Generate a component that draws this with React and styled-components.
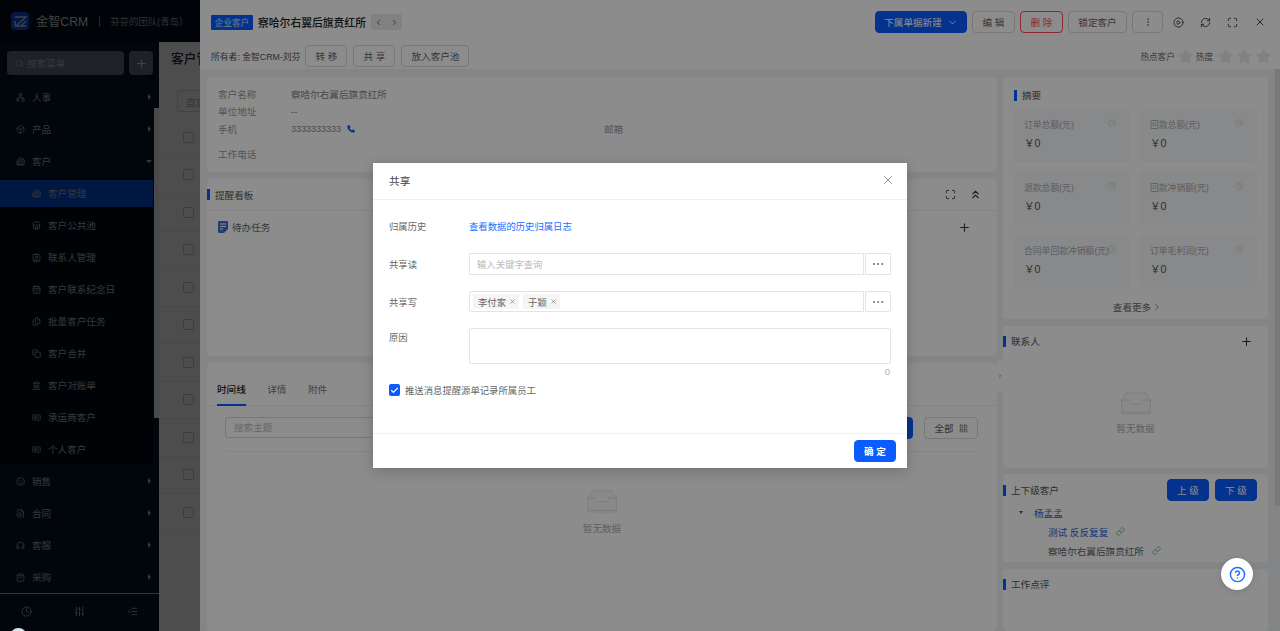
import React from "react";
import styled, { createGlobalStyle } from "styled-components";
import {
  Search, Plus, Network, Box, Building2, Store, Contact, CalendarDays, Copy, Files, Landmark,
  Clock, SlidersVertical, IndentDecrease, CirclePlay, RefreshCw, Maximize, X, ChevronLeft,
  ChevronRight, ChevronDown, ChevronsUp, EllipsisVertical, Ellipsis, Phone, Star, Link as ChainLink, Check, LayoutGrid,
  Smile, FileClock, Headphones, ShoppingBag, IdCard, CircleHelp,
} from "lucide-react";

const Global = createGlobalStyle`
  html, body { margin: 0; padding: 0; height: 631px; overflow: hidden; background: #fff; }
  * { box-sizing: border-box; }
  body { font-family: "Liberation Sans", "Noto Sans CJK SC", sans-serif; font-size: 9.6px; color: #555; }
`;

const Page = styled.div`
  position: relative;
  display: flex;
  width: 1280px;
  height: 631px;
  overflow: hidden;
  background: #fff;
`;
const Sidebar = styled.aside`
  position: relative;
  flex: 0 0 159px;
  width: 159px;
  min-width: 0;
  display: flex;
  flex-direction: column;
  background: #001529;
  color: #b4b8bc;
`;
const Brand = styled.div`
  display: flex;
  align-items: center;
  flex: 0 0 42px;
  padding-left: 11px;
  background: #00101f;
`;
const LogoMark = styled.span`
  display: flex;
  align-items: center;
  justify-content: center;
  flex: none;
  width: 18px;
  height: 18px;
  margin-right: 7px;
  border-radius: 4px;
  background: #0e4fe0;
`;
const BrandName = styled.span`
  font-size: 12.2px;
  color: #d8d8d8;
  white-space: nowrap;
`;
const BrandDivider = styled.span`
  flex: none;
  width: 1px;
  height: 11px;
  margin: 0 10px 0 11px;
  background: #888;
`;
const Team = styled.span`
  font-size: 9.4px;
  color: #9da3a8;
  white-space: nowrap;
`;
const SearchRow = styled.div`
  display: flex;
  gap: 5px;
  flex: 0 0 39px;
  padding: 9px 6px 6px 7px;
`;
const MenuSearch = styled.div`
  display: flex;
  align-items: center;
  gap: 3px;
  flex: 1;
  padding-left: 8px;
  border-radius: 4px;
  background: #687080;
  color: #b8bcc2;
`;
const AddBtn = styled.div`
  display: flex;
  align-items: center;
  justify-content: center;
  width: 24px;
  border-radius: 4px;
  background: #687080;
  color: #e0e2e5;
`;
const Menu = styled.nav`
  flex: 1;
  min-height: 0;
`;
const MenuItem = styled.div`
  display: flex;
  align-items: center;
  height: 32px;
  padding-left: 16px;
  gap: 7px;
`;
const Caret = styled.span`
  width: 0;
  height: 0;
  margin-left: auto;
  margin-right: 8px;
  ${(p) =>
    p.$open
      ? "border-left: 3px solid transparent; border-right: 3px solid transparent; border-top: 3px solid #bbb; margin-right: 7px;"
      : "border-top: 3px solid transparent; border-bottom: 3px solid transparent; border-left: 3px solid #bbb;"}
`;
const SubMenu = styled.div`
  width: 153px;
  background: #000c17;
`;
const SubItem = styled.div`
  display: flex;
  align-items: center;
  gap: 7px;
  height: 32px;
  padding-left: 32px;
  position: relative;
  z-index: 0;
  ${(p) =>
    p.$active &&
    `&::before { content: ""; position: absolute; z-index: -1; left: 0; right: 0; top: 3px; bottom: 2px; background: #0052d9; }`}
`;
const SideFooter = styled.div`
  display: grid;
  grid-template-columns: repeat(3, 1fr);
  align-items: center;
  justify-items: center;
  flex: 0 0 38px;
  padding: 0 0 2px;
  border-top: 1px solid #b0b8c0;
`;
const SideScroll = styled.div`
  position: absolute;
  left: 154px;
  top: 108px;
  width: 5px;
  height: 310px;
  background: #f2f2f2;
`;
const Avatar = styled.div`
  position: absolute;
  z-index: 30;
  left: 10px;
  top: 628px;
  width: 17px;
  height: 17px;
  border-radius: 50%;
  background: #d8e6ee;
`;
const ListPane = styled.main`
  flex: 0 0 41px;
  display: flex;
  flex-direction: column;
  min-width: 0;
  overflow: hidden;
`;
const ListTop = styled.div`
  flex: 0 0 42px;
  background: #00101f;
`;
const ListTitle = styled.div`
  flex: 0 0 30px;
  padding: 6px 0 0 12px;
  font-size: 12.8px;
  font-weight: 500;
  color: #333;
  white-space: nowrap;
`;
const ListTool = styled.div`
  flex: 0 0 22px;
  width: 60px;
  margin: 18px 0 0 18px;
  padding: 4px 0 0 8px;
  border: 1px solid #ddd;
  border-radius: 3px;
  color: #aaa;
  white-space: nowrap;
`;
const Rows = styled.div`
  padding-top: 7px;
`;
const Row = styled.div`
  height: 37.5px;
  display: flex;
  align-items: center;
  padding-left: 24px;
  border-bottom: 1px solid #f2f2f2;
`;
const Tick = styled.span`
  display: block;
  width: 11px;
  height: 11px;
  border: 1px solid #ccc;
  border-radius: 2px;
  background: #fff;
`;
const Mask = styled.div`
  position: absolute;
  inset: 0;
  z-index: ${(p) => p.$z};
  background: rgba(0, 0, 0, 0.45);
`;
const Drawer = styled.section`
  position: absolute;
  z-index: 6;
  left: 200px;
  right: 0;
  top: 0;
  bottom: 0;
  display: flex;
  flex-direction: column;
  background: #f0f2f5;
`;
const DrawerHead = styled.header`
  flex: 0 0 69px;
  background: #fff;
`;
const TopLine = styled.div`
  display: flex;
  align-items: center;
  height: 44px;
  padding: 0 14px 0 11px;
`;
const CompanyTag = styled.span`
  display: flex;
  align-items: center;
  justify-content: center;
  width: 42px;
  height: 15px;
  margin-right: 5px;
  border-radius: 1px;
  background: #0a5cff;
  color: #d0e0ff;
  font-size: 8.6px;
`;
const Heading = styled.h1`
  margin: 0 5px 0 0;
  font-size: 10.8px;
  font-weight: 500;
  color: #222;
  white-space: nowrap;
`;
const Pager = styled.div`
  display: flex;
  width: 31px;
  height: 16px;
  border-radius: 2px;
  background: #ececec;
  color: #444;
  align-items: center;
  justify-content: space-around;
`;
const TopActions = styled.div`
  display: flex;
  align-items: center;
  margin-left: auto;
  gap: 5px;
`;
const Btn = styled.button`
  display: inline-flex;
  align-items: center;
  justify-content: center;
  gap: 5px;
  width: ${(p) => p.$w}px;
  height: 22px;
  padding: 0;
  border: 1px solid ${(p) => (p.$primary ? "#0a5cff" : p.$danger ? "#ff4d4f" : "#d9d9d9")};
  border-radius: 4px;
  background: ${(p) => (p.$primary ? "#0a5cff" : "#fff")};
  color: ${(p) => (p.$primary ? "#fff" : p.$danger ? "#ff4d4f" : "#666")};
  font: inherit;
  font-size: 9.6px;
  white-space: nowrap;
`;
const HeadIcons = styled.div`
  display: flex;
  align-items: center;
  gap: 16px;
  margin-left: 5px;
  color: #444;
`;
const SubLine = styled.div`
  display: flex;
  align-items: center;
  gap: 6px;
  height: 24px;
  padding: 0 8px 0 11px;
`;
const Owner = styled.span`
  margin-right: -1px;
  color: #555;
  font-size: 8.8px;
  white-space: nowrap;
`;
const HotBox = styled.div`
  display: flex;
  align-items: center;
  gap: 2px;
  margin-left: auto;
  font-size: 8.6px;
  color: #666;
`;
const Stars = styled.div`
  display: flex;
  gap: 2px;
  margin-left: 2px;
`;
const Body = styled.div`
  position: relative;
  flex: 1;
  display: flex;
  gap: 6px;
  min-height: 0;
  padding: 8px 12px 0 7px;
  overflow: hidden;
`;
const Col = styled.div`
  display: flex;
  flex-direction: column;
  gap: ${(p) => p.$gap}px;
  width: ${(p) => p.$w}px;
`;
const Card = styled.div`
  flex: ${(p) => (p.$h ? `0 0 ${p.$h}px` : "1")};
  min-height: 0;
  border-radius: 4px;
  background: #fff;
  position: relative;
`;
const InfoGrid = styled.div`
  display: grid;
  grid-template-columns: 73px 313px 1fr;
  grid-auto-rows: 17.5px;
  align-items: center;
  padding: 8px 11px;
  color: #999;
  font-size: 9.6px;
`;
const InfoValue = styled.span`
  display: flex;
  align-items: center;
  gap: 6px;
  color: #888;
`;
const Digits = styled.span`
  font-size: 9px;
`;
const LastLabel = styled.span`
  margin-top: 16px;
`;
const CardHead = styled.div`
  display: flex;
  align-items: center;
  height: ${(p) => p.$h || 31}px;
  padding-right: ${(p) => p.$pr || 0}px;
  ${(p) => p.$line && "border-bottom: 1px solid #f0f0f0;"}
  padding-left: ${(p) => p.$pl || 0}px;
  padding-top: ${(p) => p.$pt || 0}px;
`;
const Accent = styled.i`
  display: block;
  width: 3px;
  height: 11px;
  margin-right: 5px;
  background: #0a5cff;
`;
const CardTitle = styled.span`
  color: #555;
  font-size: 9.6px;
  white-space: nowrap;
`;
const HeadTools = styled.div`
  display: flex;
  align-items: center;
  gap: ${(p) => p.$gap || 13}px;
  margin-left: auto;
  color: #333;
`;
const TaskRow = styled.div`
  display: flex;
  align-items: center;
  height: 32px;
  padding: 0 26px 0 11px;
  gap: 4px;
  color: #666;
`;
const TaskIcon = styled.svg`
  flex: none;
`;
const Tabs = styled.div`
  display: flex;
  align-items: flex-end;
  gap: 21.5px;
  height: 43px;
  padding-left: 10px;
  border-bottom: 1px solid #f0f0f0;
`;
const Tab = styled.span`
  padding-bottom: 8px;
  margin-bottom: -1px;
  color: ${(p) => (p.$on ? "#222" : "#777")};
  font-weight: ${(p) => (p.$on ? 500 : 400)};
  border-bottom: 2px solid ${(p) => (p.$on ? "#0a5cff" : "transparent")};
`;
const FilterRow = styled.div`
  display: flex;
  gap: 11px;
  margin: 11px 19px 0 18px;
  padding-bottom: 12px;
  border-bottom: 1px solid #f0f0f0;
`;
const FilterInput = styled.div`
  flex: 1;
  display: flex;
  align-items: center;
  height: 21px;
  padding: 0 8px 1px;
  border: 1px solid #d9d9d9;
  border-radius: 3px;
  color: #bbb;
`;
const Empty = styled.div`
  display: flex;
  flex-direction: column;
  align-items: center;
  gap: ${(p) => p.$gap || 6}px;
  padding-top: ${(p) => p.$top}px;
  color: #b0b0b0;
`;
const StatGrid = styled.div`
  display: grid;
  grid-template-columns: 116px 117px;
  grid-auto-rows: 53px;
  gap: 10px;
  margin-left: 11px;
`;
const Stat = styled.div`
  position: relative;
  padding: 9px 10px;
  background: #f8f9fb;
  border-radius: 4px;
  color: #aaa;
  font-size: 8.8px;
  white-space: nowrap;
`;
const StatValue = styled.div`
  margin: 4px 0 0 0;
  color: #555;
  font-size: 10.6px;
`;
const StatClock = styled.span`
  position: absolute;
  right: 14px;
  top: 10px;
  color: #c4c4c4;
`;
const More = styled.div`
  display: flex;
  align-items: center;
  justify-content: center;
  height: 31px;
  padding: 6px 0 0 4px;
  color: #666;
  gap: 1px;
`;
const Tree = styled.div`
  margin-top: -3px;
`;
const Branch = styled.div`
  display: flex;
  align-items: center;
  gap: 6px;
  height: 19px;
  padding-left: ${(p) => p.$indent}px;
  color: ${(p) => (p.$link ? "#2a62d8" : "#666")};
  white-space: nowrap;
`;
const TreeCaret = styled.span`
  width: 0;
  height: 0;
  margin-right: 5px;
  border-left: 2.5px solid transparent;
  border-right: 2.5px solid transparent;
  border-top: 3px solid #555;
`;
const LinkMark = styled.span`
  display: flex;
  margin-left: 2px;
  color: #5fae8a;
`;
const Handle = styled.div`
  position: absolute;
  left: 797px;
  top: 291px;
  width: 6px;
  height: 32px;
  display: flex;
  align-items: center;
  justify-content: center;
  background: #fff;
  color: #555;
  border-radius: 2px;
`;
const DrawerScroll = styled.div`
  position: absolute;
  left: 1075px;
  top: 0;
  width: 5px;
  height: 437px;
  background: #dcdcdc;
`;
const ModalLayer = styled.div`
  position: absolute;
  inset: 0;
  z-index: 10;
  display: flex;
  align-items: center;
  justify-content: center;
`;
const Modal = styled.div`
  display: flex;
  flex-direction: column;
  width: 534px;
  height: 305px;
  background: #fff;
  box-shadow: 0 3px 12px rgba(0, 0, 0, 0.2);
  font-size: 9.36px;
`;
const ModalHead = styled.div`
  display: flex;
  align-items: center;
  justify-content: space-between;
  flex: 0 0 37px;
  padding: 0 12px 2px 16px;
  border-bottom: 1px solid #f0f0f0;
  font-size: 10.7px;
  color: #444;
`;
const ModalBody = styled.div`
  flex: 1;
  padding: 15px 16px 0;
`;
const Field = styled.div`
  display: grid;
  grid-template-columns: 80px 1fr;
  align-items: ${(p) => (p.$top ? "start" : "center")};
  min-height: ${(p) => p.$h || 22}px;
  margin-bottom: ${(p) => (p.$mb === undefined ? 16 : p.$mb)}px;
`;
const FieldLabel = styled.label`
  color: #666;
  ${(p) => p.$top && "padding-top: 2px;"}
`;
const LinkText = styled.a`
  color: #1a6dff;
`;
const Combo = styled.div`
  display: flex;
  height: ${(p) => p.$h || 22}px;
`;
const ComboInput = styled.div`
  flex: 1;
  display: flex;
  align-items: center;
  gap: 4px;
  padding: 0 3px;
  border: 1px solid #e4e4e4;
  border-radius: 2px 0 0 2px;
`;
const Placeholder = styled.span`
  margin-left: 4px;
  color: #bbb;
`;
const ChipTag = styled.span`
  display: inline-flex;
  align-items: center;
  gap: 3px;
  height: 15px;
  padding: 0 3px 0 5px;
  background: #f5f5f5;
  color: #666;
`;
const Dots = styled.button`
  display: flex;
  align-items: center;
  justify-content: center;
  width: 26px;
  margin-left: 1px;
  padding: 0;
  border: 1px solid #e4e4e4;
  border-radius: 0 2px 2px 0;
  background: #fff;
  color: #666;
`;
const Reason = styled.div`
  height: 36px;
  border: 1px solid #e4e4e4;
  border-radius: 2px;
`;
const Counter = styled.div`
  height: 19px;
  padding: 2px 1px 0 0;
  text-align: right;
  color: #b0b0b0;
  font-size: 9.6px;
`;
const CheckRow = styled.div`
  display: flex;
  align-items: center;
  gap: 5px;
  color: #666;
`;
const CheckBox = styled.span`
  display: flex;
  align-items: center;
  justify-content: center;
  width: 11px;
  height: 12px;
  border-radius: 2px;
  background: #0a5cff;
  color: #fff;
`;
const ModalFoot = styled.div`
  display: flex;
  align-items: center;
  justify-content: flex-end;
  flex: 0 0 35px;
  padding: 0 11px 0 0;
  border-top: 1px solid #f0f0f0;
`;
const ConfirmBtn = styled(Btn)`
  font-weight: 700;
`;
const HelpFab = styled.div`
  position: absolute;
  z-index: 20;
  left: 1221px;
  top: 558px;
  width: 32px;
  height: 32px;
  display: flex;
  align-items: center;
  justify-content: center;
  border-radius: 50%;
  background: #fff;
  color: #1a6dff;
  box-shadow: 0 1px 6px rgba(0, 0, 0, 0.15);
`;

const Logo = () => (
  <LogoMark>
    <svg width="13" height="13" viewBox="0 0 13 13" fill="none" stroke="#c9d8f5" strokeWidth="1.4">
      <path d="M1 2h11L2 11h10" />
      <path d="M1 6v5M7 11l5-5" />
    </svg>
  </LogoMark>
);

const Inbox = ({ w = 36 }) => (
  <svg width={w} height={w * 0.72} viewBox="0 0 50 36" fill="none">
    <ellipse cx="25" cy="32" rx="22" ry="3.5" fill="#f0f0f0" />
    <path d="M12 4h26l7 10v15a2 2 0 0 1-2 2H7a2 2 0 0 1-2-2V14z" fill="#fafafa" stroke="#d9d9d9" />
    <path d="M5 14h11c0 3 2 5 4 5h10c2 0 4-2 4-5h11" fill="#fff" stroke="#d9d9d9" />
  </svg>
);

const Rating = () => <Star size={17} fill="#ececec" stroke="#ececec" strokeWidth={1} />;

const topMenu = [
  ["人事", Network],
  ["产品", Box],
];
const subMenu = [
  ["客户管理", Building2],
  ["客户公共池", Store],
  ["联系人管理", Contact],
  ["客户联系纪念日", CalendarDays],
  ["批量客户任务", Files],
  ["客户合并", Copy],
  ["客户对账单", Landmark],
  ["承运商客户", IdCard],
  ["个人客户", IdCard],
];
const bottomMenu = [
  ["销售", Smile],
  ["合同", FileClock],
  ["客服", Headphones],
  ["采购", ShoppingBag],
];
const stats = ["订单总额(元)", "回款总额(元)", "退款总额(元)", "回款冲销额(元)", "合同单回款冲销额(元)", "订单毛利润(元)"];

const Title = ({ children }) => (
  <>
    <Accent />
    <CardTitle>{children}</CardTitle>
  </>
);

export default function App() {
  return (
    <Page>
      <Global />
      <Sidebar>
        <Brand>
          <Logo />
          <BrandName>金智CRM</BrandName>
          <BrandDivider />
          <Team>芬芬的团队(青岛）</Team>
        </Brand>
        <SearchRow>
          <MenuSearch>
            <Search size={9} />
            搜索菜单
          </MenuSearch>
          <AddBtn>
            <Plus size={13} />
          </AddBtn>
        </SearchRow>
        <Menu>
          {topMenu.map(([t, I]) => (
            <MenuItem key={t}>
              <I size={9} />
              {t}
              <Caret />
            </MenuItem>
          ))}
          <MenuItem>
            <Building2 size={9} />
            客户
            <Caret $open />
          </MenuItem>
          <SubMenu>
            {subMenu.map(([t, I], i) => (
              <SubItem key={t} $active={i === 0}>
                <I size={9} />
                {t}
              </SubItem>
            ))}
          </SubMenu>
          {bottomMenu.map(([t, I]) => (
            <MenuItem key={t}>
              <I size={9} />
              {t}
              <Caret />
            </MenuItem>
          ))}
        </Menu>
        <SideFooter>
          <Clock size={11} />
          <SlidersVertical size={11} />
          <IndentDecrease size={11} />
        </SideFooter>
        <SideScroll />
      </Sidebar>
      <ListPane>
        <ListTop />
        <ListTitle>客户管理</ListTitle>
        <ListTool>自定义</ListTool>
        <Rows>
          {Array.from({ length: 11 }).map((_, i) => (
            <Row key={i}>
              <Tick />
            </Row>
          ))}
        </Rows>
      </ListPane>
      <Mask $z={5} />
      <Drawer>
        <DrawerHead>
          <TopLine>
            <CompanyTag>企业客户</CompanyTag>
            <Heading>察哈尔右翼后旗贲红所</Heading>
            <Pager>
              <ChevronLeft size={9} />
              <ChevronRight size={9} />
            </Pager>
            <TopActions>
              <Btn $primary $w={92}>
                下属单据新建
                <ChevronDown size={11} />
              </Btn>
              <Btn $w={43}>编 辑</Btn>
              <Btn $danger $w={43}>删 除</Btn>
              <Btn $w={59}>锁定客户</Btn>
              <Btn $w={31}>
                <EllipsisVertical size={10} />
              </Btn>
              <HeadIcons>
                <CirclePlay size={11} />
                <RefreshCw size={11} />
                <Maximize size={11} />
                <X size={12} />
              </HeadIcons>
            </TopActions>
          </TopLine>
          <SubLine>
            <Owner>所有者: 金智CRM-刘芬</Owner>
            <Btn $w={42}>转 移</Btn>
            <Btn $w={42}>共 享</Btn>
            <Btn $w={68}>放入客户池</Btn>
            <HotBox>
              热点客户
              <Rating />
              热度
              <Stars>
                <Rating />
                <Rating />
                <Rating />
              </Stars>
            </HotBox>
          </SubLine>
        </DrawerHead>
        <Body>
          <Col $w={790} $gap={7}>
            <Card $h={95}>
              <InfoGrid>
                <span>客户名称</span>
                <InfoValue>察哈尔右翼后旗贲红所</InfoValue>
                <span />
                <span>单位地址</span>
                <InfoValue>--</InfoValue>
                <span />
                <span>手机</span>
                <InfoValue>
                  <Digits>3333333333</Digits>
                  <Phone size={8} fill="#0a5cff" stroke="#0a5cff" />
                </InfoValue>
                <span>邮箱</span>
                <LastLabel>工作电话</LastLabel>
              </InfoGrid>
            </Card>
            <Card $h={177}>
              <CardHead $line $h={32} $pr={15}>
                <Title>提醒看板</Title>
                <HeadTools>
                  <Maximize size={11} />
                  <ChevronsUp size={13} />
                </HeadTools>
              </CardHead>
              <TaskRow>
                <TaskIcon width="10" height="12" viewBox="0 0 10 12">
                  <path d="M1 0h8a1 1 0 0 1 1 1v7l-4 4H1a1 1 0 0 1-1-1V1a1 1 0 0 1 1-1z" fill="#3f6ce0" />
                  <path d="M2 3h6M2 5.5h6M2 8h3" stroke="#fff" strokeWidth="1" />
                </TaskIcon>
                待办任务
                <HeadTools>
                  <Plus size={13} />
                </HeadTools>
              </TaskRow>
            </Card>
            <Card>
              <Tabs>
                <Tab $on>时间线</Tab>
                <Tab>详情</Tab>
                <Tab>附件</Tab>
              </Tabs>
              <FilterRow>
                <FilterInput>搜索主题</FilterInput>
                <Btn $primary $w={20} />
                <Btn $w={54}>
                  全部
                  <LayoutGrid size={9} />
                </Btn>
              </FilterRow>
              <Empty $top={36} $gap={7}>
                <Inbox />
                暂无数据
              </Empty>
            </Card>
          </Col>
          <Col $w={265} $gap={6.5}>
            <Card $h={242}>
              <CardHead $h={32} $pl={11} $pt={4}>
                <Title>摘要</Title>
              </CardHead>
              <StatGrid>
                {stats.map((s) => (
                  <Stat key={s}>
                    {s}
                    <StatClock>
                      <Clock size={8} strokeWidth={1.5} />
                    </StatClock>
                    <StatValue>￥0</StatValue>
                  </Stat>
                ))}
              </StatGrid>
              <More>
                查看更多
                <ChevronRight size={10} />
              </More>
            </Card>
            <Card $h={142}>
              <CardHead $pr={15}>
                <Title>联系人</Title>
                <HeadTools>
                  <Plus size={13} />
                </HeadTools>
              </CardHead>
              <Empty $top={33} $gap={6}>
                <Inbox />
                暂无数据
              </Empty>
            </Card>
            <Card $h={88}>
              <CardHead $h={32} $pr={11}>
                <Title>上下级客户</Title>
                <HeadTools $gap={6}>
                  <Btn $primary $w={42}>上 级</Btn>
                  <Btn $primary $w={42}>下 级</Btn>
                </HeadTools>
              </CardHead>
              <Tree>
                <Branch $indent={16} $link>
                  <TreeCaret />
                  杨孟孟
                </Branch>
                <Branch $indent={45} $link>
                  测试 反反复复
                  <LinkMark>
                    <ChainLink size={9} />
                  </LinkMark>
                </Branch>
                <Branch $indent={45}>
                  察哈尔右翼后旗贲红所
                  <LinkMark>
                    <ChainLink size={9} />
                  </LinkMark>
                </Branch>
              </Tree>
            </Card>
            <Card>
              <CardHead $h={31}>
                <Title>工作点评</Title>
              </CardHead>
            </Card>
          </Col>
          <Handle>
            <ChevronRight size={8} />
          </Handle>
          <DrawerScroll />
        </Body>
      </Drawer>
      <Mask $z={8} />
      <ModalLayer>
        <Modal>
          <ModalHead>
            共享
            <X size={14} color="#777" strokeWidth={1.4} />
          </ModalHead>
          <ModalBody>
            <Field>
              <FieldLabel>归属历史</FieldLabel>
              <LinkText>查看数据的历史归属日志</LinkText>
            </Field>
            <Field>
              <FieldLabel>共享读</FieldLabel>
              <Combo>
                <ComboInput>
                  <Placeholder>输入关键字查询</Placeholder>
                </ComboInput>
                <Dots>
                  <Ellipsis size={14} strokeWidth={1.5} />
                </Dots>
              </Combo>
            </Field>
            <Field $h={21}>
              <FieldLabel>共享写</FieldLabel>
              <Combo $h={21}>
                <ComboInput>
                  <ChipTag>
                    李付家
                    <X size={7} />
                  </ChipTag>
                  <ChipTag>
                    于颖
                    <X size={7} />
                  </ChipTag>
                </ComboInput>
                <Dots>
                  <Ellipsis size={14} strokeWidth={1.5} />
                </Dots>
              </Combo>
            </Field>
            <Field $top $h={36} $mb={0}>
              <FieldLabel $top>原因</FieldLabel>
              <Reason />
            </Field>
            <Counter>0</Counter>
            <CheckRow>
              <CheckBox>
                <Check size={9} strokeWidth={3} />
              </CheckBox>
              推送消息提醒源单记录所属员工
            </CheckRow>
          </ModalBody>
          <ModalFoot>
            <ConfirmBtn $primary $w={42}>确 定</ConfirmBtn>
          </ModalFoot>
        </Modal>
      </ModalLayer>
      <HelpFab>
        <CircleHelp size={17} />
      </HelpFab>
      <Avatar />
    </Page>
  );
}
